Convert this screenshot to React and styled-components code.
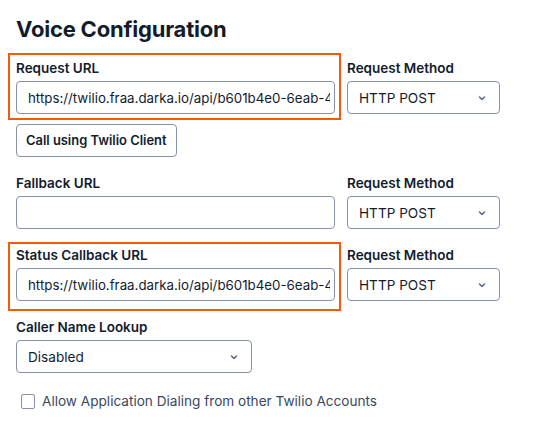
import React from "react";
import styled, { createGlobalStyle } from "styled-components";

const Global = createGlobalStyle`
  html, body { margin: 0; padding: 0; background: #ffffff; }
  body { font-family: Inter, "Noto Sans", "Liberation Sans", sans-serif; color: #121c2d; }
  * { box-sizing: border-box; }
`;

const Page = styled.div`
  width: 535px;
  height: 427px;
  padding: 15px 16px 0 16px;
  overflow: hidden;
`;

const Title = styled.h2`
  margin: 0 0 17px 0;
  font-size: 22px;
  line-height: 28px;
  font-weight: 700;
  letter-spacing: -0.2px;
  color: #121c2d;
`;

const Form = styled.div`
  display: flex;
  flex-direction: column;
`;

const Row = styled.div`
  display: grid;
  grid-template-columns: 319px 153px;
  column-gap: 12px;
  margin-top: ${(p) => p.$top || 0}px;
`;

const Field = styled.div`
  position: relative;
  display: flex;
  flex-direction: column;
`;

const Highlight = styled.div`
  position: absolute;
  left: -8px;
  right: -6px;
  top: ${(p) => p.$top}px;
  bottom: ${(p) => p.$bottom}px;
  border: 2px solid #f25a0e;
  pointer-events: none;
`;

const Label = styled.label`
  display: block;
  font-size: 13.5px;
  line-height: 16px;
  font-weight: 600;
  color: #121c2d;
  margin-bottom: 5px;
`;

const Input = styled.div`
  height: 33px;
  width: ${(p) => (p.$w ? `${p.$w}px` : "100%")};
  border: 1px solid #8891aa;
  border-radius: 4px;
  background: #fff;
  display: flex;
  align-items: center;
  padding: 0 4px 0 11px;
  font-size: 13.3px;
  color: #121c2d;
`;

const InputText = styled.span`
  flex: 1;
  min-width: 0;
  white-space: nowrap;
  overflow: hidden;
`;

const Select = styled(Input)`
  justify-content: space-between;
  padding: 0 12px 0 11px;
  font-size: 13.6px;
  svg { flex-shrink: 0; }
`;

const Button = styled.button`
  align-self: flex-start;
  margin-top: 10px;
  height: 33px;
  padding: 0 9px;
  border: 1px solid #8891aa;
  border-radius: 4px;
  background: #fff;
  font-family: inherit;
  font-size: 12.9px;
  font-weight: 600;
  color: #121c2d;
`;

const CheckRow = styled.div`
  display: flex;
  align-items: center;
  gap: 7px;
  margin-top: 20px;
  padding-left: 5px;
`;

const Box = styled.span`
  width: 14px;
  height: 15px;
  border: 1px solid #8891aa;
  border-radius: 2px;
  background: #fff;
`;

const CheckText = styled.span`
  font-size: 13.6px;
  line-height: 16px;
  color: #394762;
`;

const Chevron = () => (
  <svg width="10" height="10" viewBox="0 0 10 10">
    <path d="M2.5 4 L5 6.5 L7.5 4" fill="none" stroke="#606b85" strokeWidth="1.6" strokeLinecap="round" strokeLinejoin="round" />
  </svg>
);

const URL = "https://twilio.fraa.darka.io/api/b601b4e0-6eab-4c2d-9f1a";

const MethodField = () => (
  <Field>
    <Label>Request Method</Label>
    <Select>
      <span>HTTP POST</span>
      <Chevron />
    </Select>
  </Field>
);

export default function App() {
  return (
    <>
      <Global />
      <Page>
        <Title>Voice Configuration</Title>
        <Form>
          <Row>
            <Field>
              <Highlight $top={-7} $bottom={-6} />
              <Label>Request URL</Label>
              <Input>
                <InputText>{URL}</InputText>
              </Input>
            </Field>
            <MethodField />
          </Row>
          <Button>Call using Twilio Client</Button>
          <Row $top={18}>
            <Field>
              <Label>Fallback URL</Label>
              <Input />
            </Field>
            <MethodField />
          </Row>
          <Row $top={18}>
            <Field>
              <Highlight $top={-5} $bottom={-10} />
              <Label>Status Callback URL</Label>
              <Input>
                <InputText>{URL}</InputText>
              </Input>
            </Field>
            <MethodField />
          </Row>
          <Row $top={18}>
            <Field>
              <Label>Caller Name Lookup</Label>
              <Select $w={236}>
                <span>Disabled</span>
                <Chevron />
              </Select>
            </Field>
          </Row>
          <CheckRow>
            <Box />
            <CheckText>Allow Application Dialing from other Twilio Accounts</CheckText>
          </CheckRow>
        </Form>
      </Page>
    </>
  );
}
